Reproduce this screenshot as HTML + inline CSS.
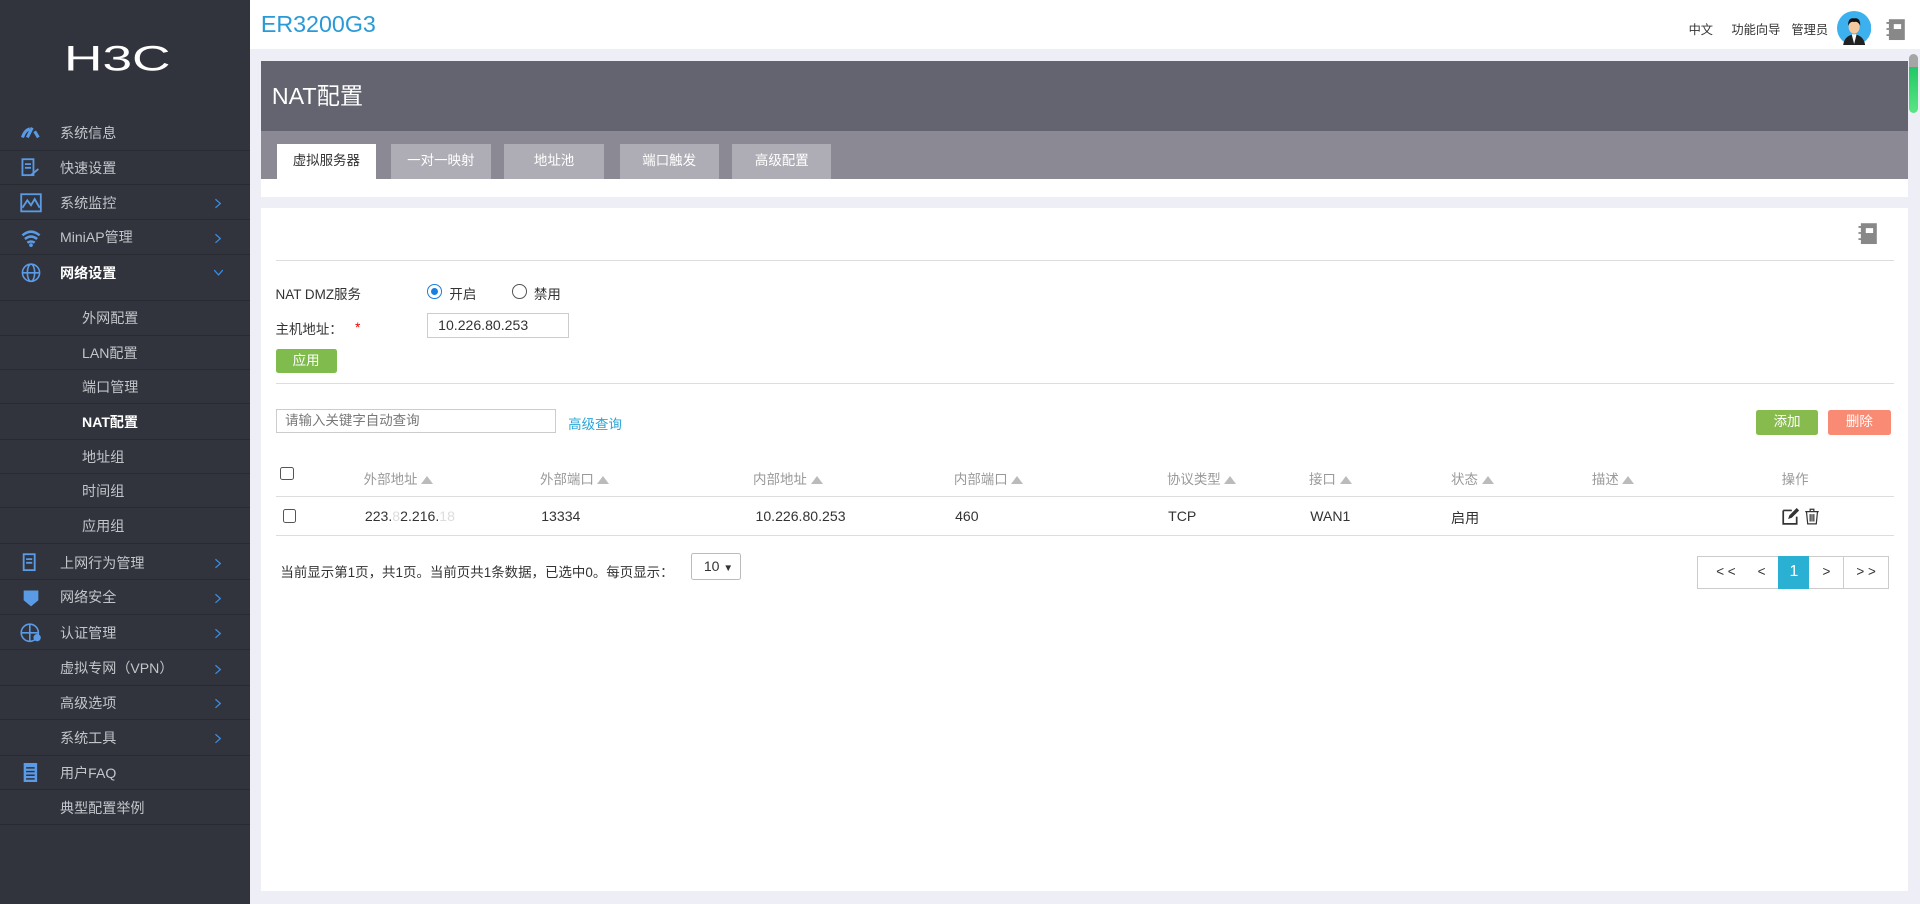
<!DOCTYPE html>
<html><head><meta charset="utf-8"><style>
*{margin:0;padding:0;box-sizing:border-box}
html,body{width:1920px;height:904px;overflow:hidden;background:#eeeff6}
#w{width:1568px;height:738px;zoom:1.2244898;position:relative;font-family:"Liberation Sans","Noto Sans CJK SC",sans-serif;font-size:11px;color:#333;background:#eeeff6}
.a{position:absolute}
#side{left:0;top:0;width:204px;height:738px;background:#31343c}
.it{position:absolute;left:0;width:204px;height:28px;border-bottom:1px solid #282a31;color:#c3c5cb;font-size:11.5px;line-height:28px}
.it span{position:absolute;left:49px}
.it.sub span{left:67px}
.it.w{color:#fff}
.ch{position:absolute;left:174px;top:10px;width:8px;height:9px}
.ic{position:absolute;left:16px;top:6px;width:18px;height:16px}
.tab{position:absolute;top:118px;height:28px;width:82px;background:#aeadb5;color:#fff;text-align:center;line-height:28px;font-size:11px}
.th{position:absolute;top:382px;color:#999}
.th i{display:inline-block;width:0;height:0;border-left:5px solid transparent;border-right:5px solid transparent;border-bottom:7px solid #bbb;margin-left:3px;vertical-align:0px}
.td{position:absolute;top:415px;color:#333;font-size:11.5px}
.cb{position:absolute;width:11px;height:11px;border:1px solid #555;border-radius:2px;background:#fff}
.pg{position:absolute;top:454px;height:27px;border:1px solid #ccc;background:#fff;text-align:center;line-height:25px;font-size:11px;color:#333}
</style></head><body><div id="w">
<div class="a" style="left:204px;top:0;width:1364px;height:40px;background:#fff"></div>
<div class="a" style="left:213px;top:9px;font-size:19px;color:#2a9ad6">ER3200G3</div>
<div class="a" style="left:1379px;top:16px;font-size:10px;color:#333">中文</div>
<div class="a" style="left:1414px;top:16px;font-size:10px;color:#333">功能向导</div>
<div class="a" style="left:1463px;top:16px;font-size:10px;color:#333">管理员</div>
<svg class="a" style="left:1500px;top:9px" width="28" height="28" viewBox="0 0 28 28"><circle cx="14" cy="14" r="14" fill="#3cb1ee"/><path d="M5 28 Q6 20 14 19 Q22 20 23 28Z" fill="#222"/><path d="M12 19 L14 27 L16 19Z" fill="#fff"/><ellipse cx="14" cy="13" rx="4.5" ry="5.5" fill="#f5c9a0"/><path d="M9 12 Q9 5 14 6 Q19 5 19 12 Q17 8 14 9 Q11 8 9 12Z" fill="#111"/></svg>
<svg class="a" style="left:1539px;top:15px" width="18" height="19" viewBox="0 0 18 19"><rect x="4" y="1" width="13" height="17" fill="#888"/><rect x="8" y="5" width="6" height="4" fill="#fff"/><path d="M2 4h4M2 9h4M2 14h4" stroke="#888" stroke-width="1.5"/></svg>
<div class="a" style="left:1559px;top:44px;width:7px;height:48px;border-radius:4px;background:linear-gradient(#a5a5a5 0,#a5a5a5 22%,#21c866 22%,#5be584 100%)"></div>

<div class="a" style="left:213px;top:50px;width:1345px;height:57px;background:#636470"></div>
<div class="a" style="left:222px;top:63px;font-size:19px;color:#fff">NAT配置</div>
<div class="a" style="left:213px;top:107px;width:1345px;height:39px;background:#8b8a94"></div>
<div class="a" style="left:213px;top:146px;width:1345px;height:15px;background:#fff"></div>
<div class="tab" style="left:226px;width:81px;background:#fff;color:#333">虚拟服务器</div>
<div class="tab" style="left:319px">一对一映射</div>
<div class="tab" style="left:412px;width:81px">地址池</div>
<div class="tab" style="left:506px;width:81px">端口触发</div>
<div class="tab" style="left:598px;width:81px">高级配置</div>

<div class="a" style="left:213px;top:170px;width:1345px;height:558px;background:#fff"></div>
<svg class="a" style="left:1516px;top:181px" width="18" height="19" viewBox="0 0 18 19"><rect x="4" y="1" width="13" height="17" fill="#888"/><rect x="8" y="5" width="6" height="4" fill="#fff"/><path d="M2 4h4M2 9h4M2 14h4" stroke="#888" stroke-width="1.5"/></svg>
<div class="a" style="left:225px;top:212px;width:1322px;height:1px;background:#ddd"></div>
<div class="a" style="left:225px;top:231px">NAT DMZ服务</div>
<div class="a" style="left:349px;top:232px;width:12px;height:12px;border-radius:50%;border:1px solid #1a7fe0;background:#fff"><div style="margin:2px;width:6px;height:6px;border-radius:50%;background:#1a7fe0"></div></div>
<div class="a" style="left:367px;top:231px">开启</div>
<div class="a" style="left:418px;top:232px;width:12px;height:12px;border-radius:50%;border:1px solid #555;background:#fff"></div>
<div class="a" style="left:436px;top:231px">禁用</div>
<div class="a" style="left:225px;top:260px">主机地址：</div>
<div class="a" style="left:290px;top:261px;color:#e00">*</div>
<div class="a" style="left:349px;top:256px;width:116px;height:20px;border:1px solid #ccc;padding-left:8px;line-height:18px;font-size:11.5px">10.226.80.253</div>
<div class="a" style="left:225px;top:285px;width:50px;height:20px;background:#7fbb4d;color:#fff;text-align:center;line-height:20px;border-radius:2px">应用</div>
<div class="a" style="left:225px;top:313px;width:1322px;height:1px;background:#ddd"></div>
<div class="a" style="left:225px;top:334px;width:229px;height:20px;border:1px solid #ccc;padding-left:7px;line-height:18px;color:#777">请输入关键字自动查询</div>
<div class="a" style="left:464px;top:337px;color:#2aa6d6">高级查询</div>
<div class="a" style="left:1434px;top:335px;width:51px;height:20px;background:#87bb4d;color:#fff;text-align:center;line-height:20px;border-radius:2px">添加</div>
<div class="a" style="left:1493px;top:335px;width:51px;height:20px;background:#f98a73;color:#fff;text-align:center;line-height:20px;border-radius:2px">删除</div>

<div class="cb" style="left:229px;top:381px"></div>
<div class="th" style="left:297px">外部地址<i></i></div>
<div class="th" style="left:441px">外部端口<i></i></div>
<div class="th" style="left:615px">内部地址<i></i></div>
<div class="th" style="left:779px">内部端口<i></i></div>
<div class="th" style="left:953px">协议类型<i></i></div>
<div class="th" style="left:1069px">接口<i></i></div>
<div class="th" style="left:1185px">状态<i></i></div>
<div class="th" style="left:1300px">描述<i></i></div>
<div class="th" style="left:1455px">操作</div>
<div class="a" style="left:225px;top:405px;width:1322px;height:1px;background:#ddd"></div>
<div class="cb" style="left:231px;top:416px"></div>
<div class="td" style="left:298px">223.<span style="color:#ddd">8</span>2.216.<span style="color:#ddd">18</span></div>
<div class="td" style="left:442px">13334</div>
<div class="td" style="left:617px">10.226.80.253</div>
<div class="td" style="left:780px">460</div>
<div class="td" style="left:954px">TCP</div>
<div class="td" style="left:1070px">WAN1</div>
<div class="td" style="left:1185px">启用</div>
<svg class="a" style="left:1455px;top:415px" width="32" height="14" viewBox="0 0 32 14"><path d="M1 2h7M1 2v11h11V7" stroke="#333" stroke-width="1.4" fill="none"/><path d="M5 9l1-3 6-6 2 2-6 6z" fill="#333"/><path d="M19 3h11M23 3V1h3v2M20 3l1 10h7l1-10M23 5v6M24.5 5v6M26 5v6" stroke="#333" stroke-width="1" fill="none"/></svg>
<div class="a" style="left:225px;top:437px;width:1322px;height:1px;background:#ddd"></div>
<div class="a" style="left:229px;top:458px">当前显示第1页，共1页。当前页共1条数据，已选中0。每页显示：</div>
<div class="a" style="left:564px;top:452px;width:41px;height:22px;border:1px solid #bbb;border-radius:2px;padding-left:10px;line-height:20px;font-size:11.5px">10 <span style="font-size:8px">&#9660;</span></div>
<div class="pg" style="left:1386px;width:47px">&lt; &lt;</div>
<div class="pg" style="left:1424px;width:30px;border-left:none">&lt;</div>
<div class="pg" style="left:1452px;width:26px;background:#29b0d3;border-color:#29b0d3;color:#fff;font-size:13px">1</div>
<div class="pg" style="left:1477px;width:30px;border-left:none">&gt;</div>
<div class="pg" style="left:1505px;width:38px">&gt; &gt;</div>

<div id="side" class="a">
<div class="a" style="left:52px;top:34px;font-size:30px;color:#fff;letter-spacing:0px;transform:scale(1.45,0.95);transform-origin:left top;font-family:'Liberation Sans',sans-serif;line-height:30px">H3C</div>
<div class="it" style="top:95px;border-bottom-color:#292b32"><svg class="ic" viewBox="0 0 18 16"><path d="M2 11 Q4 5 8 4M6 11l4-8M12 6l3 5" stroke="#5b9ae5" stroke-width="2.5" fill="none"/></svg><span>系统信息</span></div>
<div class="it" style="top:123px"><svg class="ic" viewBox="0 0 18 16"><rect x="2" y="1" width="9" height="13" stroke="#5b9ae5" stroke-width="1.5" fill="none"/><path d="M4 5h5M4 8h5M9 14l6-5" stroke="#5b9ae5" stroke-width="1.5"/></svg><span>快速设置</span></div>
<div class="it" style="top:152px"><svg class="ic" viewBox="0 0 18 16"><rect x="1" y="1" width="16" height="14" stroke="#5b9ae5" stroke-width="1.5" fill="none"/><path d="M2 12l4-6 3 4 3-5 4 7" stroke="#5b9ae5" stroke-width="1.5" fill="none"/></svg><span>系统监控</span><svg class="ch" viewBox="0 0 8 9"><path d="M2 1l4 3.5-4 3.5" stroke="#3a8ee6" fill="none"/></svg></div>
<div class="it" style="top:180px"><svg class="ic" viewBox="0 0 18 16"><path d="M2 6q7-6 14 0M4 9q5-4 10 0M6 12q3-2 6 0" stroke="#5b9ae5" stroke-width="2" fill="none"/><circle cx="9" cy="14" r="1.5" fill="#5b9ae5"/></svg><span>MiniAP管理</span><svg class="ch" viewBox="0 0 8 9"><path d="M2 1l4 3.5-4 3.5" stroke="#3a8ee6" fill="none"/></svg></div>
<div class="it w" style="top:209px;height:37px"><svg class="ic" viewBox="0 0 18 16"><circle cx="9" cy="8" r="7" stroke="#5b9ae5" stroke-width="1.3" fill="none"/><ellipse cx="9" cy="8" rx="3" ry="7" stroke="#5b9ae5" stroke-width="1.3" fill="none"/><path d="M2 8h14" stroke="#5b9ae5" stroke-width="1.3"/></svg><span style="font-weight:bold">网络设置</span><svg class="ch" style="top:9px;width:9px" viewBox="0 0 9 8"><path d="M1 2l3.5 4 3.5-4" stroke="#3a8ee6" fill="none"/></svg></div>
<div class="it sub" style="top:246px"><span>外网配置</span></div>
<div class="it sub" style="top:274px"><span>LAN配置</span></div>
<div class="it sub" style="top:302px"><span>端口管理</span></div>
<div class="it sub w" style="top:331px"><span style="font-weight:bold">NAT配置</span></div>
<div class="it sub" style="top:359px"><span>地址组</span></div>
<div class="it sub" style="top:387px"><span>时间组</span></div>
<div class="it sub" style="top:416px"><span>应用组</span></div>
<div class="it" style="top:446px"><svg class="ic" viewBox="0 0 18 16"><rect x="3" y="1" width="9" height="13" stroke="#5b9ae5" stroke-width="1.5" fill="none"/><path d="M5 5h5M5 8h5" stroke="#5b9ae5" stroke-width="1.5"/></svg><span>上网行为管理</span><svg class="ch" viewBox="0 0 8 9"><path d="M2 1l4 3.5-4 3.5" stroke="#3a8ee6" fill="none"/></svg></div>
<div class="it" style="top:474px"><svg class="ic" viewBox="0 0 18 16"><path d="M3 2h12v8l-6 5-6-5z" fill="#5b9ae5"/></svg><span>网络安全</span><svg class="ch" viewBox="0 0 8 9"><path d="M2 1l4 3.5-4 3.5" stroke="#3a8ee6" fill="none"/></svg></div>
<div class="it" style="top:503px"><svg class="ic" viewBox="0 0 18 16"><circle cx="8" cy="8" r="7" stroke="#5b9ae5" stroke-width="1.3" fill="none"/><path d="M1 8h14M8 1v14" stroke="#5b9ae5" stroke-width="1.3"/><circle cx="14" cy="12" r="3" fill="#5b9ae5"/></svg><span>认证管理</span><svg class="ch" viewBox="0 0 8 9"><path d="M2 1l4 3.5-4 3.5" stroke="#3a8ee6" fill="none"/></svg></div>
<div class="it" style="top:532px"><span>虚拟专网（VPN）</span><svg class="ch" viewBox="0 0 8 9"><path d="M2 1l4 3.5-4 3.5" stroke="#3a8ee6" fill="none"/></svg></div>
<div class="it" style="top:560px"><span>高级选项</span><svg class="ch" viewBox="0 0 8 9"><path d="M2 1l4 3.5-4 3.5" stroke="#3a8ee6" fill="none"/></svg></div>
<div class="it" style="top:589px"><span>系统工具</span><svg class="ch" viewBox="0 0 8 9"><path d="M2 1l4 3.5-4 3.5" stroke="#3a8ee6" fill="none"/></svg></div>
<div class="it" style="top:617px"><svg class="ic" viewBox="0 0 18 16"><rect x="3" y="0" width="11" height="16" fill="#5b9ae5"/><path d="M5 4h7M5 7h7M5 10h7M5 13h7" stroke="#31343c" stroke-width="1.2"/></svg><span>用户FAQ</span></div>
<div class="it" style="top:646px"><span>典型配置举例</span></div>
</div>
</div></body></html>
